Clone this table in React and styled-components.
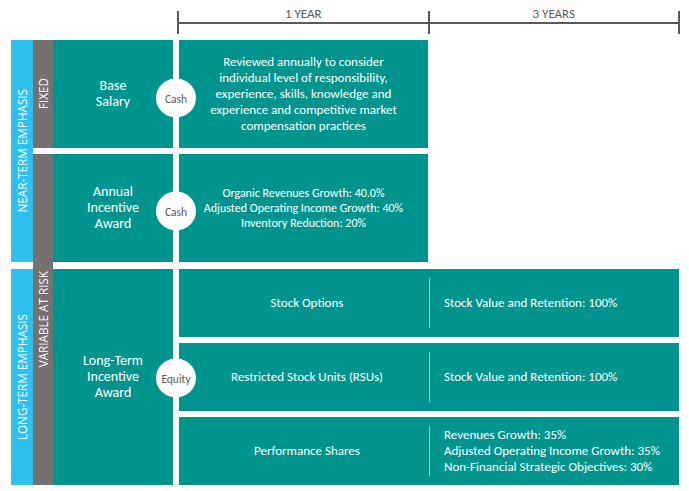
import React from 'react';
import styled, { createGlobalStyle } from 'styled-components';

const FONT = `"Carlito", "Lato", "Liberation Sans", sans-serif`;
const TEAL = '#00948f';
const BLUE = '#2ec0ef';
const GRAY = '#767171';
const INK = '#595959';

const Global = createGlobalStyle`
  html, body { margin: 0; padding: 0; background: #fff; }
  body { font-family: ${FONT}; -webkit-font-smoothing: antialiased; }
`;

const Page = styled.div`
  width: 689px;
  height: 491px;
  box-sizing: border-box;
  padding: 11px 0 0 11px;
  overflow: hidden;
`;

const Timeline = styled.div`
  display: flex;
  margin-left: 166px;
  width: 503px;
  height: 23px;
`;

const Segment = styled.div`
  flex: 1;
  position: relative;
  border-left: 2px solid ${INK};
  ${(p) => (p.$last ? `border-right: 2px solid ${INK};` : '')}
  &::after {
    content: '';
    position: absolute;
    left: 0;
    right: 0;
    top: 11px;
    height: 1.5px;
    background: ${INK};
  }
`;

const SegLabel = styled.div`
  margin-top: -4px;
  text-align: center;
  font-size: 13px;
  line-height: 14px;
  color: ${INK};
`;

const Chart = styled.div`
  margin-top: 6px;
  display: grid;
  grid-template-columns: 22px 20px 120px 6px 500px;
  grid-template-rows: 108px 6px 108px 7px 216px;
`;

const Bar = styled.div`
  grid-column: ${(p) => p.$col};
  grid-row: ${(p) => p.$rows};
  background: ${(p) => p.$color};
  display: flex;
  align-items: center;
  justify-content: center;
  overflow: hidden;
`;

const VerticalText = styled.span`
  writing-mode: vertical-rl;
  transform: rotate(180deg);
  white-space: nowrap;
  color: #fff;
  font-family: "Open Sans", sans-serif;
  font-size: 11.7px;
`;

const LabelCell = styled.div`
  grid-column: 3;
  grid-row: ${(p) => p.$row};
  position: relative;
  background: ${TEAL};
  display: flex;
  align-items: center;
  justify-content: center;
  text-align: center;
  color: #fff;
  font-size: 14px;
  line-height: 16px;
`;

const Badge = styled.div`
  position: absolute;
  z-index: 1;
  right: -23px;
  top: calc(50% + ${(p) => p.$shift || 0}px);
  transform: translateY(-50%);
  width: 40px;
  height: 39px;
  border-radius: 50%;
  background: #fff;
  display: flex;
  align-items: center;
  justify-content: center;
  color: ${INK};
  font-size: 11.5px;
`;

const DetailCell = styled.div`
  grid-column: 5;
  grid-row: ${(p) => p.$row};
  width: 249px;
  background: ${TEAL};
  display: flex;
  align-items: center;
  justify-content: center;
  text-align: center;
  color: #fff;
  font-size: ${(p) => p.$size}px;
  line-height: ${(p) => p.$lh}px;
  white-space: nowrap;
`;

const Stack = styled.div`
  grid-column: 5;
  grid-row: 5;
  display: grid;
  grid-template-rows: repeat(3, 68px);
  row-gap: 6px;
`;

const SubRow = styled.div`
  background: ${TEAL};
  display: grid;
  grid-template-columns: 250px 1fr;
  color: #fff;
  font-size: 13px;
  line-height: 16px;
`;

const SubName = styled.div`
  display: flex;
  align-items: center;
  justify-content: center;
  padding-left: 6px;
`;

const SubMetrics = styled.div`
  margin: 9px 0;
  border-left: 1px solid rgba(255, 255, 255, 0.55);
  padding-left: 14px;
  display: flex;
  flex-direction: column;
  justify-content: center;
`;

const lti = [
  { name: 'Stock Options', metrics: ['Stock Value and Retention: 100%'] },
  { name: 'Restricted Stock Units (RSUs)', metrics: ['Stock Value and Retention: 100%'] },
  {
    name: 'Performance Shares',
    metrics: [
      'Revenues Growth: 35%',
      'Adjusted Operating Income Growth: 35%',
      'Non-Financial Strategic Objectives: 30%',
    ],
  },
];

const Lines = ({ items }) =>
  items.map((t, i) => (
    <React.Fragment key={t}>
      {i > 0 && <br />}
      {t}
    </React.Fragment>
  ));

export default function App() {
  return (
    <>
      <Global />
      <Page>
        <Timeline>
          <Segment>
            <SegLabel>1 YEAR</SegLabel>
          </Segment>
          <Segment $last>
            <SegLabel>3 YEARS</SegLabel>
          </Segment>
        </Timeline>
        <Chart>
          <Bar $col={1} $rows="1 / 4" $color={BLUE}>
            <VerticalText>NEAR-TERM EMPHASIS</VerticalText>
          </Bar>
          <Bar $col={1} $rows="5 / 6" $color={BLUE}>
            <VerticalText>LONG-TERM EMPHASIS</VerticalText>
          </Bar>
          <Bar $col={2} $rows="1 / 2" $color={GRAY}>
            <VerticalText>FIXED</VerticalText>
          </Bar>
          <Bar $col={2} $rows="3 / 6" $color={GRAY}>
            <VerticalText>VARIABLE AT RISK</VerticalText>
          </Bar>

          <LabelCell $row={1}>
            <div>
              <Lines items={['Base', 'Salary']} />
            </div>
            <Badge $shift={4}>Cash</Badge>
          </LabelCell>
          <DetailCell $row={1} $size={13} $lh={16}>
            <div>
              <Lines
                items={[
                  'Reviewed annually to consider',
                  'individual level of responsibility,',
                  'experience, skills, knowledge and',
                  'experience and competitive market',
                  'compensation practices',
                ]}
              />
            </div>
          </DetailCell>

          <LabelCell $row={3}>
            <div>
              <Lines items={['Annual', 'Incentive', 'Award']} />
            </div>
            <Badge $shift={3}>Cash</Badge>
          </LabelCell>
          <DetailCell $row={3} $size={12} $lh={15}>
            <div>
              <Lines
                items={[
                  'Organic Revenues Growth: 40.0%',
                  'Adjusted Operating Income Growth: 40%',
                  'Inventory Reduction: 20%',
                ]}
              />
            </div>
          </DetailCell>

          <LabelCell $row={5}>
            <div>
              <Lines items={['Long-Term', 'Incentive', 'Award']} />
            </div>
            <Badge $shift={1}>Equity</Badge>
          </LabelCell>
          <Stack>
            {lti.map((r) => (
              <SubRow key={r.name}>
                <SubName>{r.name}</SubName>
                <SubMetrics>
                  {r.metrics.map((m) => (
                    <div key={m}>{m}</div>
                  ))}
                </SubMetrics>
              </SubRow>
            ))}
          </Stack>
        </Chart>
      </Page>
    </>
  );
}
